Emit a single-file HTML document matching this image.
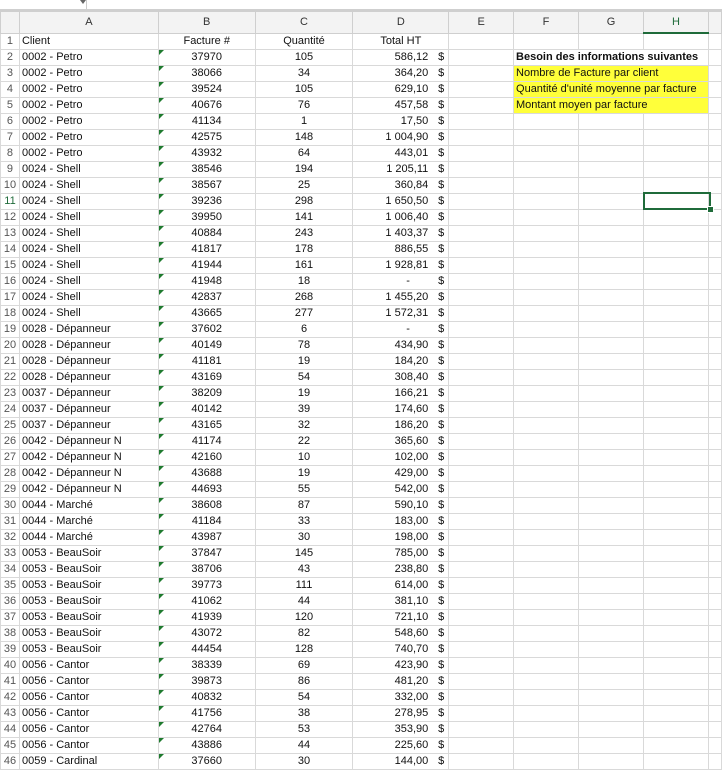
<!DOCTYPE html>
<html><head><meta charset="utf-8"><style>
body{margin:0;width:722px;height:764px;overflow:hidden;background:#fff;font-family:"Liberation Sans",Arial,sans-serif;font-size:11px;color:#111}
.top{position:absolute;left:0;top:0;width:722px;height:9px;background:#fff;border-bottom:2px solid #cfcfcf}
.top .dd{position:absolute;left:80px;top:0;width:0;height:0;border-left:3px solid transparent;border-right:3px solid transparent;border-top:4px solid #666}
.top .sep{position:absolute;left:86px;top:0;width:1px;height:9px;background:#ccc}
table{position:absolute;left:0;top:11px;border-collapse:collapse;table-layout:fixed}
td{height:15px;padding:0 2px;border:1px solid #d9d9d9;white-space:nowrap;overflow:hidden;line-height:15px;position:relative}
tr.h td{height:20px;background:#f3f3f3;text-align:center;color:#333;border-color:#cfcfcf}
td.r{text-align:center;color:#555;background:#fff;padding:0;font-size:11px}
tr.h td.r{background:#f3f3f3}
td.b,td.c{text-align:center}
td.b::before{content:"";position:absolute;left:0;top:0;border-top:5px solid #1e7a2e;border-right:5px solid transparent}
td.d{text-align:right;padding-right:20px}
td.d i{font-style:normal;position:absolute;right:4px;top:0}
td.y{background:#ffff3a}
.sel{position:absolute;left:643px;top:192px;width:64px;height:14px;border:2px solid #1f6b3a}
.sel::after{content:"";position:absolute;right:-5px;bottom:-5px;width:5px;height:5px;background:#1f6b3a;border:1px solid #fff}
.hh{border-bottom:2px solid #1f6b3a!important;color:#1f6b3a!important}
</style></head><body>
<div class="top"><div class="dd"></div><div class="sep"></div></div>
<table>
<colgroup><col style="width:19px"><col style="width:139px"><col style="width:97px"><col style="width:98px"><col style="width:96px"><col style="width:65px"><col style="width:65px"><col style="width:65px"><col style="width:65px"><col style="width:13px"></colgroup>
<tr class="h"><td class="r"></td><td>A</td><td>B</td><td>C</td><td>D</td><td>E</td><td>F</td><td>G</td><td class="hh">H</td><td></td></tr>
<tr><td class="r">1</td><td>Client</td><td class="c">Facture #</td><td class="c">Quantité</td><td class="c">Total HT</td><td></td><td></td><td></td><td></td><td></td></tr>
<tr><td class="r">2</td><td>0002 - Petro</td><td class="b">37970</td><td class="c">105</td><td class="d">586,12<i>$</i></td><td></td><td colspan="3" style="font-weight:bold">Besoin des informations suivantes</td><td></td></tr>
<tr><td class="r">3</td><td>0002 - Petro</td><td class="b">38066</td><td class="c">34</td><td class="d">364,20<i>$</i></td><td></td><td class="y" colspan="3">Nombre de Facture par client</td><td></td></tr>
<tr><td class="r">4</td><td>0002 - Petro</td><td class="b">39524</td><td class="c">105</td><td class="d">629,10<i>$</i></td><td></td><td class="y" colspan="3">Quantité d'unité moyenne par facture</td><td></td></tr>
<tr><td class="r">5</td><td>0002 - Petro</td><td class="b">40676</td><td class="c">76</td><td class="d">457,58<i>$</i></td><td></td><td class="y" colspan="3">Montant moyen par facture</td><td></td></tr>
<tr><td class="r">6</td><td>0002 - Petro</td><td class="b">41134</td><td class="c">1</td><td class="d">17,50<i>$</i></td><td></td><td></td><td></td><td></td><td></td></tr>
<tr><td class="r">7</td><td>0002 - Petro</td><td class="b">42575</td><td class="c">148</td><td class="d">1 004,90<i>$</i></td><td></td><td></td><td></td><td></td><td></td></tr>
<tr><td class="r">8</td><td>0002 - Petro</td><td class="b">43932</td><td class="c">64</td><td class="d">443,01<i>$</i></td><td></td><td></td><td></td><td></td><td></td></tr>
<tr><td class="r">9</td><td>0024 - Shell</td><td class="b">38546</td><td class="c">194</td><td class="d">1 205,11<i>$</i></td><td></td><td></td><td></td><td></td><td></td></tr>
<tr><td class="r">10</td><td>0024 - Shell</td><td class="b">38567</td><td class="c">25</td><td class="d">360,84<i>$</i></td><td></td><td></td><td></td><td></td><td></td></tr>
<tr><td class="r" style="color:#1f6b3a">11</td><td>0024 - Shell</td><td class="b">39236</td><td class="c">298</td><td class="d">1 650,50<i>$</i></td><td></td><td></td><td></td><td></td><td></td></tr>
<tr><td class="r">12</td><td>0024 - Shell</td><td class="b">39950</td><td class="c">141</td><td class="d">1 006,40<i>$</i></td><td></td><td></td><td></td><td></td><td></td></tr>
<tr><td class="r">13</td><td>0024 - Shell</td><td class="b">40884</td><td class="c">243</td><td class="d">1 403,37<i>$</i></td><td></td><td></td><td></td><td></td><td></td></tr>
<tr><td class="r">14</td><td>0024 - Shell</td><td class="b">41817</td><td class="c">178</td><td class="d">886,55<i>$</i></td><td></td><td></td><td></td><td></td><td></td></tr>
<tr><td class="r">15</td><td>0024 - Shell</td><td class="b">41944</td><td class="c">161</td><td class="d">1 928,81<i>$</i></td><td></td><td></td><td></td><td></td><td></td></tr>
<tr><td class="r">16</td><td>0024 - Shell</td><td class="b">41948</td><td class="c">18</td><td class="d">-&nbsp;&nbsp;&nbsp;&nbsp;&nbsp;&nbsp;<i>$</i></td><td></td><td></td><td></td><td></td><td></td></tr>
<tr><td class="r">17</td><td>0024 - Shell</td><td class="b">42837</td><td class="c">268</td><td class="d">1 455,20<i>$</i></td><td></td><td></td><td></td><td></td><td></td></tr>
<tr><td class="r">18</td><td>0024 - Shell</td><td class="b">43665</td><td class="c">277</td><td class="d">1 572,31<i>$</i></td><td></td><td></td><td></td><td></td><td></td></tr>
<tr><td class="r">19</td><td>0028 - Dépanneur</td><td class="b">37602</td><td class="c">6</td><td class="d">-&nbsp;&nbsp;&nbsp;&nbsp;&nbsp;&nbsp;<i>$</i></td><td></td><td></td><td></td><td></td><td></td></tr>
<tr><td class="r">20</td><td>0028 - Dépanneur</td><td class="b">40149</td><td class="c">78</td><td class="d">434,90<i>$</i></td><td></td><td></td><td></td><td></td><td></td></tr>
<tr><td class="r">21</td><td>0028 - Dépanneur</td><td class="b">41181</td><td class="c">19</td><td class="d">184,20<i>$</i></td><td></td><td></td><td></td><td></td><td></td></tr>
<tr><td class="r">22</td><td>0028 - Dépanneur</td><td class="b">43169</td><td class="c">54</td><td class="d">308,40<i>$</i></td><td></td><td></td><td></td><td></td><td></td></tr>
<tr><td class="r">23</td><td>0037 - Dépanneur</td><td class="b">38209</td><td class="c">19</td><td class="d">166,21<i>$</i></td><td></td><td></td><td></td><td></td><td></td></tr>
<tr><td class="r">24</td><td>0037 - Dépanneur</td><td class="b">40142</td><td class="c">39</td><td class="d">174,60<i>$</i></td><td></td><td></td><td></td><td></td><td></td></tr>
<tr><td class="r">25</td><td>0037 - Dépanneur</td><td class="b">43165</td><td class="c">32</td><td class="d">186,20<i>$</i></td><td></td><td></td><td></td><td></td><td></td></tr>
<tr><td class="r">26</td><td>0042 - Dépanneur N</td><td class="b">41174</td><td class="c">22</td><td class="d">365,60<i>$</i></td><td></td><td></td><td></td><td></td><td></td></tr>
<tr><td class="r">27</td><td>0042 - Dépanneur N</td><td class="b">42160</td><td class="c">10</td><td class="d">102,00<i>$</i></td><td></td><td></td><td></td><td></td><td></td></tr>
<tr><td class="r">28</td><td>0042 - Dépanneur N</td><td class="b">43688</td><td class="c">19</td><td class="d">429,00<i>$</i></td><td></td><td></td><td></td><td></td><td></td></tr>
<tr><td class="r">29</td><td>0042 - Dépanneur N</td><td class="b">44693</td><td class="c">55</td><td class="d">542,00<i>$</i></td><td></td><td></td><td></td><td></td><td></td></tr>
<tr><td class="r">30</td><td>0044 - Marché</td><td class="b">38608</td><td class="c">87</td><td class="d">590,10<i>$</i></td><td></td><td></td><td></td><td></td><td></td></tr>
<tr><td class="r">31</td><td>0044 - Marché</td><td class="b">41184</td><td class="c">33</td><td class="d">183,00<i>$</i></td><td></td><td></td><td></td><td></td><td></td></tr>
<tr><td class="r">32</td><td>0044 - Marché</td><td class="b">43987</td><td class="c">30</td><td class="d">198,00<i>$</i></td><td></td><td></td><td></td><td></td><td></td></tr>
<tr><td class="r">33</td><td>0053 - BeauSoir</td><td class="b">37847</td><td class="c">145</td><td class="d">785,00<i>$</i></td><td></td><td></td><td></td><td></td><td></td></tr>
<tr><td class="r">34</td><td>0053 - BeauSoir</td><td class="b">38706</td><td class="c">43</td><td class="d">238,80<i>$</i></td><td></td><td></td><td></td><td></td><td></td></tr>
<tr><td class="r">35</td><td>0053 - BeauSoir</td><td class="b">39773</td><td class="c">111</td><td class="d">614,00<i>$</i></td><td></td><td></td><td></td><td></td><td></td></tr>
<tr><td class="r">36</td><td>0053 - BeauSoir</td><td class="b">41062</td><td class="c">44</td><td class="d">381,10<i>$</i></td><td></td><td></td><td></td><td></td><td></td></tr>
<tr><td class="r">37</td><td>0053 - BeauSoir</td><td class="b">41939</td><td class="c">120</td><td class="d">721,10<i>$</i></td><td></td><td></td><td></td><td></td><td></td></tr>
<tr><td class="r">38</td><td>0053 - BeauSoir</td><td class="b">43072</td><td class="c">82</td><td class="d">548,60<i>$</i></td><td></td><td></td><td></td><td></td><td></td></tr>
<tr><td class="r">39</td><td>0053 - BeauSoir</td><td class="b">44454</td><td class="c">128</td><td class="d">740,70<i>$</i></td><td></td><td></td><td></td><td></td><td></td></tr>
<tr><td class="r">40</td><td>0056 - Cantor</td><td class="b">38339</td><td class="c">69</td><td class="d">423,90<i>$</i></td><td></td><td></td><td></td><td></td><td></td></tr>
<tr><td class="r">41</td><td>0056 - Cantor</td><td class="b">39873</td><td class="c">86</td><td class="d">481,20<i>$</i></td><td></td><td></td><td></td><td></td><td></td></tr>
<tr><td class="r">42</td><td>0056 - Cantor</td><td class="b">40832</td><td class="c">54</td><td class="d">332,00<i>$</i></td><td></td><td></td><td></td><td></td><td></td></tr>
<tr><td class="r">43</td><td>0056 - Cantor</td><td class="b">41756</td><td class="c">38</td><td class="d">278,95<i>$</i></td><td></td><td></td><td></td><td></td><td></td></tr>
<tr><td class="r">44</td><td>0056 - Cantor</td><td class="b">42764</td><td class="c">53</td><td class="d">353,90<i>$</i></td><td></td><td></td><td></td><td></td><td></td></tr>
<tr><td class="r">45</td><td>0056 - Cantor</td><td class="b">43886</td><td class="c">44</td><td class="d">225,60<i>$</i></td><td></td><td></td><td></td><td></td><td></td></tr>
<tr><td class="r">46</td><td>0059 - Cardinal</td><td class="b">37660</td><td class="c">30</td><td class="d">144,00<i>$</i></td><td></td><td></td><td></td><td></td><td></td></tr>
</table>
<div class="sel"></div>
</body></html>
